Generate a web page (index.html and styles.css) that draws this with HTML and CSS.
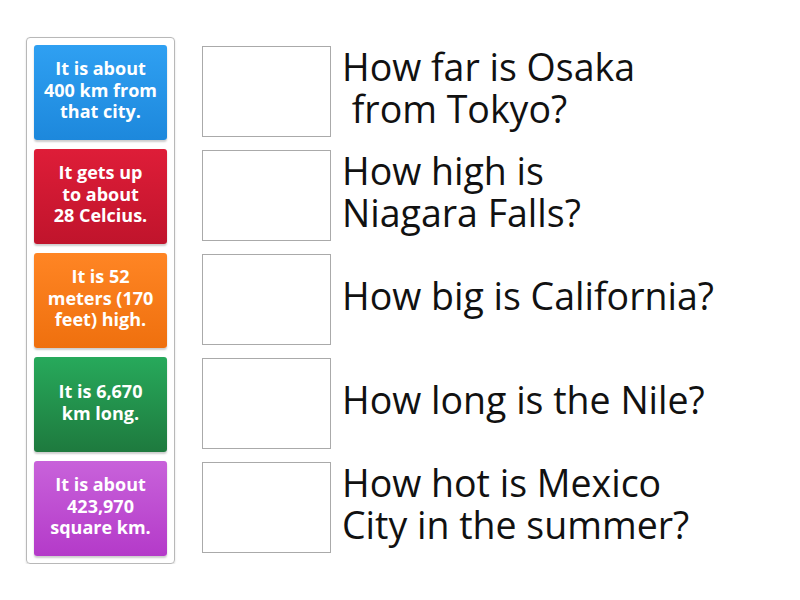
FILE: index.html
```html
<!DOCTYPE html>
<html>
<head>
<meta charset="utf-8">
<link rel="stylesheet" href="styles.css">
</head>
<body>
<div class="page">
  <div class="tray">
    <div class="card blue">It is about<br>400 km from<br>that city.</div>
    <div class="card red">It gets up<br>to about<br>28 Celcius.</div>
    <div class="card orange">It is 52<br>meters (170<br>feet) high.</div>
    <div class="card green">It is 6,670<br>km long.</div>
    <div class="card purple">It is about<br>423,970<br>square km.</div>
  </div>
  <div class="questions">
    <div class="row"><div class="slot"></div><div class="q">How far is Osaka<br>&nbsp;from Tokyo?</div></div>
    <div class="row"><div class="slot"></div><div class="q">How high is<br>Niagara Falls?</div></div>
    <div class="row"><div class="slot"></div><div class="q">How big is California?</div></div>
    <div class="row"><div class="slot"></div><div class="q">How long is the Nile?</div></div>
    <div class="row"><div class="slot"></div><div class="q">How hot is Mexico<br>City in the summer?</div></div>
  </div>
</div>
</body>
</html>
```
FILE: styles.css
```css
html, body {
  margin: 0;
  padding: 0;
  background: #fff;
  font-family: "Open Sans", "Noto Sans", sans-serif;
}
.page {
  display: flex;
  align-items: flex-start;
  padding: 37px 0 0 26px;
}
.tray {
  width: 133px;
  padding: 7px;
  border: 1px solid #b8b8b8;
  border-radius: 4px;
  display: flex;
  flex-direction: column;
  gap: 9px;
  box-shadow: 0 1px 2px rgba(0,0,0,0.15);
}
.card {
  height: 95px;
  border-radius: 3px;
  color: #fff;
  font-weight: 700;
  font-size: 18px;
  line-height: 21.5px;
  text-align: center;
  display: flex;
  align-items: center;
  justify-content: center;
  padding: 0 1px 4px;
  box-sizing: border-box;
  white-space: nowrap;
  box-shadow: 0 2px 2px rgba(0,0,0,0.2);
}
.blue { background: linear-gradient(#2fa0f2, #1d88dc); }
.red { background: linear-gradient(#de1d38, #c0142c); }
.orange { background: linear-gradient(#ff8524, #ef700e); }
.green { background: linear-gradient(#27a95b, #1e7a3e); }
.purple { background: linear-gradient(#c862da, #b43ac9); }
.questions {
  margin-left: 27px;
  margin-top: 9px;
  display: flex;
  flex-direction: column;
  gap: 13px;
}
.row {
  display: flex;
  align-items: center;
  height: 91px;
}
.slot {
  width: 127px;
  height: 89px;
  border: 1px solid #aaa;
  background: #fff;
  flex: none;
}
.q {
  margin-left: 11px;
  margin-top: -8px;
  font-size: 37.5px;
  line-height: 42px;
  color: #111;
  white-space: nowrap;
}
```
